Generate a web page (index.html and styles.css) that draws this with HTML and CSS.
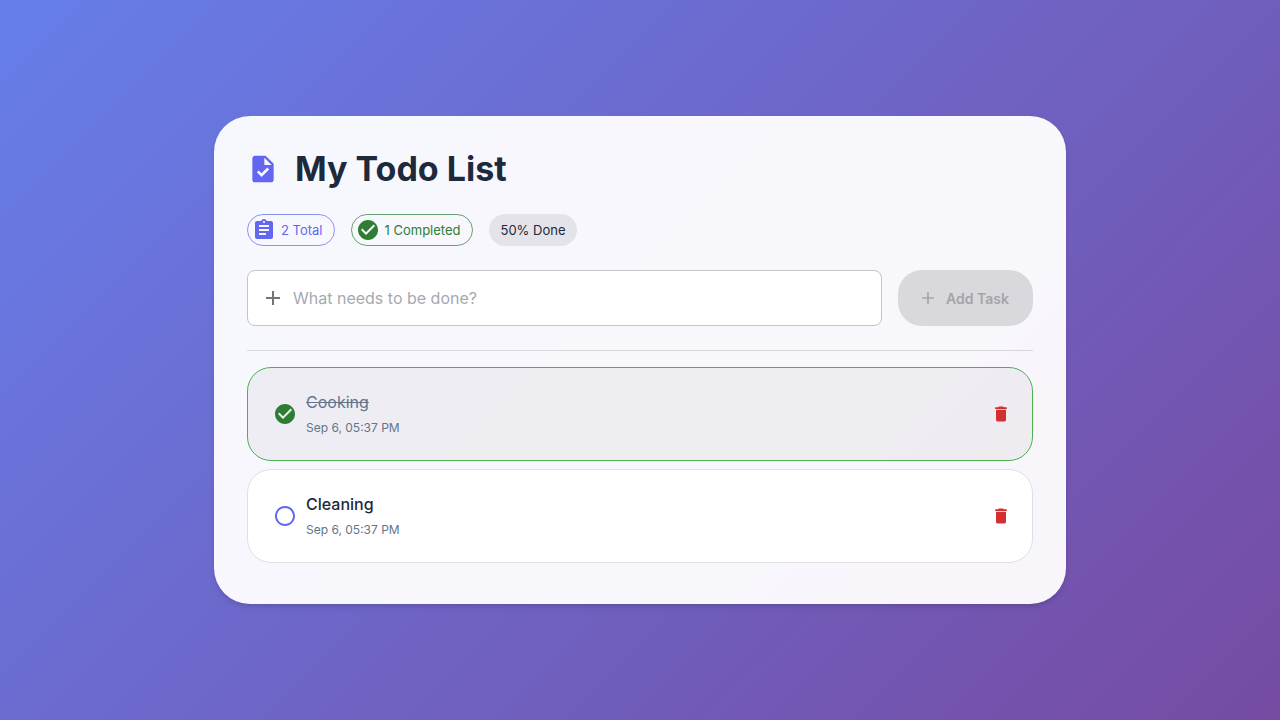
FILE: index.html
```html
<!DOCTYPE html>
<html lang="en">
<head>
<meta charset="utf-8">
<meta name="viewport" content="width=device-width, initial-scale=1">
<title>My Todo List</title>
<link rel="stylesheet" href="styles.css">
</head>
<body>
<main class="card">
  <header class="header">
    <svg class="icon icon-lg" viewBox="0 0 24 24" aria-hidden="true"><path d="M14 2H6c-1.100 0-1.990.9-1.990 2L4 20c0 1.100.89 2 1.990 2H18c1.100 0 2-.9 2-2V8l-6-6zm-3.060 16L7.400 14.460l1.410-1.410 2.120 2.120 4.240-4.240 1.410 1.410L10.940 18zM13 9V3.500L18.500 9H13z"/></svg>
    <h1 class="title">My Todo List</h1>
  </header>
  <div class="chips">
    <span class="chip chip-total"><svg class="icon icon-md" viewBox="0 0 24 24" aria-hidden="true"><path d="M19 3h-4.180C14.400 1.840 13.300 1 12 1c-1.300 0-2.400.84-2.820 2H5c-1.100 0-2 .9-2 2v14c0 1.100.9 2 2 2h14c1.100 0 2-.9 2-2V5c0-1.100-.9-2-2-2zm-7 0c.55 0 1 .45 1 1s-.45 1-1 1-1-.45-1-1 .45-1 1-1zm2 14H7v-2h7v2zm3-4H7v-2h10v2zm0-4H7V7h10v2z"/></svg>2 Total</span>
    <span class="chip chip-completed"><svg class="icon icon-md" viewBox="0 0 24 24" aria-hidden="true"><path d="M12 2C6.480 2 2 6.480 2 12s4.480 10 10 10 10-4.480 10-10S17.520 2 12 2zm-2 15l-5-5 1.410-1.410L10 14.170l7.590-7.590L19 8l-9 9z"/></svg>1 Completed</span>
    <span class="chip chip-percent">50% Done</span>
  </div>
  <form class="form">
    <label class="field">
      <svg class="icon icon-md" viewBox="0 0 24 24" aria-hidden="true"><path d="M19 13h-6v6h-2v-6H5v-2h6V5h2v6h6v2z"/></svg>
      <input class="field-input" type="text" placeholder="What needs to be done?" aria-label="New task">
    </label>
    <button class="add" type="submit" disabled>
      <svg class="icon icon-sm" viewBox="0 0 24 24" aria-hidden="true"><path d="M19 13h-6v6h-2v-6H5v-2h6V5h2v6h6v2z"/></svg>
      Add Task
    </button>
  </form>
  <hr class="divider">
  <ul class="list">
    <li class="item item-done">
      <label class="task">
        <input class="check" type="checkbox" checked>
        <svg class="icon icon-md mark mark-on" viewBox="0 0 24 24" aria-hidden="true"><path d="M12 2C6.480 2 2 6.480 2 12s4.480 10 10 10 10-4.480 10-10S17.520 2 12 2zm-2 15l-5-5 1.410-1.410L10 14.170l7.590-7.590L19 8l-9 9z"/></svg>
        <svg class="icon icon-md mark mark-off" viewBox="0 0 24 24" aria-hidden="true"><path d="M12 2C6.480 2 2 6.480 2 12s4.480 10 10 10 10-4.480 10-10S17.520 2 12 2zm0 18c-4.420 0-8-3.580-8-8s3.580-8 8-8 8 3.580 8 8-3.580 8-8 8z"/></svg>
        <span class="text"><span class="name">Cooking</span><time class="time">Sep 6, 05:37 PM</time></span>
      </label>
      <button class="delete" type="button" aria-label="Delete Cooking"><svg class="icon icon-sm" viewBox="0 0 24 24" aria-hidden="true"><path d="M6 19c0 1.100.9 2 2 2h8c1.100 0 2-.9 2-2V7H6v12zM19 4h-3.500l-1-1h-5l-1 1H5v2h14V4z"/></svg></button>
    </li>
    <li class="item">
      <label class="task">
        <input class="check" type="checkbox">
        <svg class="icon icon-md mark mark-on" viewBox="0 0 24 24" aria-hidden="true"><path d="M12 2C6.480 2 2 6.480 2 12s4.480 10 10 10 10-4.480 10-10S17.520 2 12 2zm-2 15l-5-5 1.410-1.410L10 14.170l7.590-7.590L19 8l-9 9z"/></svg>
        <svg class="icon icon-md mark mark-off" viewBox="0 0 24 24" aria-hidden="true"><path d="M12 2C6.480 2 2 6.480 2 12s4.480 10 10 10 10-4.480 10-10S17.520 2 12 2zm0 18c-4.420 0-8-3.580-8-8s3.580-8 8-8 8 3.580 8 8-3.580 8-8 8z"/></svg>
        <span class="text"><span class="name">Cleaning</span><time class="time">Sep 6, 05:37 PM</time></span>
      </label>
      <button class="delete" type="button" aria-label="Delete Cleaning"><svg class="icon icon-sm" viewBox="0 0 24 24" aria-hidden="true"><path d="M6 19c0 1.100.9 2 2 2h8c1.100 0 2-.9 2-2V7H6v12zM19 4h-3.500l-1-1h-5l-1 1H5v2h14V4z"/></svg></button>
    </li>
  </ul>
</main>
</body>
</html>
```
FILE: styles.css
```css
* { box-sizing: border-box; }

body {
  margin: 0;
  min-height: 100vh;
  padding: 24px;
  display: flex;
  align-items: center;
  justify-content: center;
  background: linear-gradient(135deg, #667eea 0%, #764ba2 100%);
  color: #1e293b;
  font-family: Inter, Roboto, sans-serif;
  font-size: 16px;
  line-height: 24px;
}

.card {
  width: 100%;
  max-width: 852px;
  padding: 32px 32px 40px;
  border: 1px solid rgba(255, 255, 255, 0.2);
  border-radius: 36px;
  background: rgba(255, 255, 255, 0.95);
  box-shadow: 0 4px 6px -1px rgba(0, 0, 0, 0.1), 0 2px 4px -1px rgba(0, 0, 0, 0.06);
}

.icon { display: block; flex: none; fill: currentColor; }
.icon-lg { width: 32px; height: 32px; }
.icon-md { width: 24px; height: 24px; }
.icon-sm { width: 20px; height: 20px; }

.header {
  display: flex;
  align-items: center;
  gap: 16px;
  margin-bottom: 25px;
  color: #6366f1;
}

.title {
  margin: 0;
  color: #1e293b;
  font-size: 34px;
  font-weight: 700;
  line-height: 40px;
}

.chips { display: flex; flex-wrap: wrap; gap: 16px; margin-bottom: 24px; }

.chip {
  display: flex;
  align-items: center;
  gap: 5px;
  height: 32px;
  padding: 0 11px 0 4px;
  border: 1px solid transparent;
  border-radius: 16px;
  font-size: 13px;
}
.chip-total { color: #6366f1; border-color: rgba(99, 102, 241, 0.7); }
.chip-completed { color: #2e7d32; border-color: rgba(46, 125, 50, 0.7); }
.chip-percent { padding: 0 12px; border: 0; background: rgba(0, 0, 0, 0.08); }

.form { display: flex; gap: 16px; }

.field {
  display: flex;
  flex: 1;
  align-items: center;
  gap: 8px;
  height: 56px;
  min-width: 0;
  padding: 0 13px;
  border: 1px solid #c4c4c6;
  border-radius: 8px;
  background: #fff;
  color: #757575;
}
.field-input {
  flex: 1;
  min-width: 0;
  padding: 0;
  border: 0;
  outline: 0;
  background: none;
  color: #1e293b;
  font: inherit;
}
.field-input::placeholder { color: #a5a9b1; opacity: 1; }

.add {
  display: flex;
  align-items: center;
  gap: 8px;
  padding: 0 24px 0 20px;
  border: 0;
  border-radius: 24px;
  background: #d9d8dd;
  color: #a4a4a7;
  font: 600 14px/25px Inter, Roboto, sans-serif;
}

.divider { margin: 24px 0 16px; border: 0; border-top: 1px solid rgba(0, 0, 0, 0.12); }

.list {
  display: flex;
  flex-direction: column;
  gap: 8px;
  margin: 0;
  padding: 0;
  list-style: none;
}

.item {
  display: flex;
  align-items: center;
  justify-content: space-between;
  padding: 22px 21px 22px 25px;
  border: 1px solid #e0e0e0;
  border-radius: 24px;
  background: #fff;
}
.item-done { border-color: #4caf50; background: rgba(0, 0, 0, 0.04); }

.task { display: flex; flex: 1; align-items: center; gap: 9px; }
.check { position: absolute; opacity: 0; }
.mark-on { display: none; color: #2e7d32; }
.mark-off { color: #6366f1; }
.check:checked ~ .mark-on { display: block; }
.check:checked ~ .mark-off { display: none; }

.text { display: flex; flex-direction: column; gap: 4px; }
.name { font-weight: 500; }
.item-done .name { color: #64748b; font-weight: 400; text-decoration: line-through; }
.time { color: #64748b; font-size: 12px; line-height: 20px; }

.delete { padding: 0; border: 0; background: none; color: #d32f2f; cursor: pointer; }
```
